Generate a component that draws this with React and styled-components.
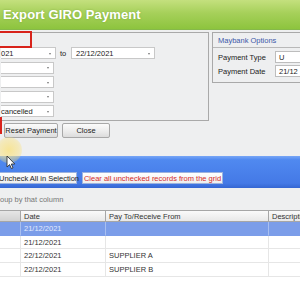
import React from "react";
import styled, { createGlobalStyle } from "styled-components";

const Global = createGlobalStyle`
  html, body { margin: 0; padding: 0; background: #eeeff0; }
  body { font-family: "Liberation Sans", Arial, sans-serif; }
`;

const Screen = styled.div`
  position: relative;
  width: 300px;
  height: 300px;
  overflow: hidden;
  background: #eeeff0;
  display: flex;
  flex-direction: column;
  font-size: 7.5px;
  color: #222;
`;

const TitleBar = styled.div`
  height: 30px;
  flex: none;
  display: flex;
  align-items: center;
  padding-left: 3px;
  background: linear-gradient(180deg, #c4e07e 0%, #a6d05a 45%, #8dc43e 100%);
  border-bottom: 1px solid #86b94a;
  box-sizing: border-box;
`;

const Title = styled.div`
  font-size: 13px;
  font-weight: bold;
  color: #fff;
  letter-spacing: 0.1px;
  text-shadow: 0 0 2px rgba(80, 120, 20, 0.4);
`;

const TopSection = styled.div`
  display: flex;
  align-items: flex-start;
  margin-top: 2px;
  flex: none;
`;

const LeftGroup = styled.div`
  width: 210px;
  margin-left: -1px;
  height: 89px;
  box-sizing: border-box;
  border: 1px solid #a9a9a9;
  padding: 14px 0 3px 1px;
  display: flex;
  flex-direction: column;
  gap: 2.5px;
  flex: none;
`;

const FieldRow = styled.div`
  display: flex;
  align-items: center;
  height: 12px;
`;

const Field = styled.div`
  position: relative;
  box-sizing: border-box;
  width: ${(p) => p.$w}px;
  height: 12px;
  background: #fff;
  border: 1px solid #c8c8c8;
  border-left: ${(p) => (p.$clipped ? "none" : "1px solid #c8c8c8")};
  padding-left: ${(p) => (p.$clipped ? 0 : 4)}px;
  display: flex;
  align-items: center;
  font-size: 7.5px;
  color: #222;
  white-space: nowrap;
  &::after {
    content: "";
    display: ${(p) => (p.$arrow ? "block" : "none")};
    position: absolute;
    right: 4px;
    top: 4.5px;
    border-left: 1.5px solid transparent;
    border-right: 1.5px solid transparent;
    border-top: 2px solid #777;
  }
`;

const ToLabel = styled.div`
  margin-left: 4px;
  width: 11px;
  font-size: 7.5px;
`;

const RightGroup = styled.div`
  margin-left: 3px;
  width: 100px;
  height: 51px;
  box-sizing: border-box;
  border: 1px solid #a9a9a9;
  flex: none;
  display: flex;
  flex-direction: column;
`;

const GroupHeader = styled.div`
  height: 14px;
  border-bottom: 1px solid #b8b8b8;
  display: flex;
  align-items: center;
  padding-left: 5px;
  color: #3d58a8;
  font-size: 7.5px;
  flex: none;
`;

const OptionRows = styled.div`
  display: flex;
  flex-direction: column;
  gap: 2px;
  padding-top: 3px;
`;

const OptionRow = styled.div`
  display: flex;
  align-items: center;
  height: 12px;
`;

const OptionLabel = styled.div`
  width: 62px;
  padding-left: 5px;
  box-sizing: border-box;
  flex: none;
`;

const OptionInput = styled.div`
  height: 12px;
  flex: 1;
  box-sizing: border-box;
  background: #fff;
  border: 1px solid #bdbdbd;
  padding-left: 3px;
  display: flex;
  align-items: center;
  white-space: nowrap;
  overflow: hidden;
`;

const ButtonRow = styled.div`
  display: flex;
  gap: 4px;
  margin: 2px 0 0 4px;
  flex: none;
`;

const Button = styled.div`
  width: ${(p) => p.$w}px;
  height: 15px;
  box-sizing: border-box;
  border: 1px solid #a8a8a8;
  border-radius: 2px;
  background: linear-gradient(180deg, #fbfbfb 0%, #ececec 55%, #dcdcdc 100%);
  display: flex;
  align-items: center;
  justify-content: center;
  font-size: 7.5px;
  color: #222;
`;

const ActionBand = styled.div`
  margin-top: 18px;
  height: 32px;
  flex: none;
  box-sizing: border-box;
  background: linear-gradient(180deg, #78a6f6 0%, #5089f0 12%, #4479e6 85%, #3566d2 100%);
  display: flex;
  align-items: flex-end;
  gap: 5px;
  padding-bottom: 4px;
`;

const BandButton = styled.div`
  width: ${(p) => p.$w}px;
  height: 12px;
  margin-left: ${(p) => p.$ml || 0}px;
  box-sizing: border-box;
  background: linear-gradient(180deg, #ffffff 0%, #eeeeee 100%);
  border: 1px solid #9db3de;
  display: flex;
  align-items: center;
  justify-content: ${(p) => (p.$left ? "flex-start" : "center")};
  font-size: 7.5px;
  color: ${(p) => p.$color || "#222"};
  white-space: nowrap;
`;

const GroupByBar = styled.div`
  height: 22px;
  flex: none;
  display: flex;
  align-items: center;
  color: #777;
  font-size: 7.5px;
  padding-top: 1px;
  box-sizing: border-box;
`;

const Grid = styled.div`
  flex: 1;
  background: #fff;
  display: flex;
  flex-direction: column;
`;

const COLS = "21px 85px 163px 40px";

const HeaderRow = styled.div`
  display: grid;
  grid-template-columns: ${COLS};
  height: 12px;
  flex: none;
`;

const HeaderCell = styled.div`
  box-sizing: border-box;
  border-top: 1px solid #a6a6a6;
  border-bottom: 1px solid #a6a6a6;
  border-right: 1px solid #a6a6a6;
  background: ${(p) =>
    p.$dark
      ? "linear-gradient(180deg, #e6e6e6 0%, #d2d2d2 100%)"
      : "linear-gradient(180deg, #fafafa 0%, #e8e8e8 100%)"};
  padding-left: 3px;
  display: flex;
  align-items: center;
  font-size: 7.5px;
  color: #333;
  white-space: nowrap;
  overflow: hidden;
`;

const DataRow = styled.div`
  display: grid;
  grid-template-columns: ${COLS};
  height: 13.7px;
  flex: none;
  background: ${(p) => (p.$selected ? "#7b9de9" : "#fff")};
`;

const DataCell = styled.div`
  box-sizing: border-box;
  border-bottom: 1px solid ${(p) => (p.$selected ? "#7b9de9" : "#e6e6e6")};
  border-right: 1px solid ${(p) => (p.$selected ? "#a8bff0" : "#e6e6e6")};
  padding-left: 3px;
  display: flex;
  align-items: center;
  font-size: 7.5px;
  color: ${(p) => (p.$selected ? "#e4ebff" : "#333")};
  white-space: nowrap;
`;

const RedFrame = styled.div`
  position: absolute;
  left: -2px;
  top: 31px;
  width: 34px;
  height: 17px;
  box-sizing: border-box;
  border: 2px solid #d8231b;
  background: #eeeff0;
`;

const RedEdge = styled.div`
  position: absolute;
  left: 0;
  top: 117px;
  width: 2px;
  height: 17px;
  background: #d8231b;
`;

const Halo = styled.div`
  position: absolute;
  left: -4px;
  top: 137px;
  width: 26px;
  height: 26px;
  border-radius: 50%;
  background: radial-gradient(circle, rgba(250, 225, 120, 0.75) 0%, rgba(250, 225, 120, 0.45) 55%, rgba(250, 225, 120, 0) 100%);
`;

const Cursor = styled.svg`
  position: absolute;
  left: 6px;
  top: 155px;
`;

const rows = [
  { date: "21/12/2021", pay: "", selected: true },
  { date: "21/12/2021", pay: "" },
  { date: "22/12/2021", pay: "SUPPLIER A" },
  { date: "22/12/2021", pay: "SUPPLIER B" },
];

export default function App() {
  return (
    <>
      <Global />
      <Screen>
        <TitleBar>
          <Title>Export GIRO Payment</Title>
        </TitleBar>
        <TopSection>
          <LeftGroup>
            <FieldRow>
              <Field $w={55} $clipped $arrow>021</Field>
              <ToLabel>to</ToLabel>
              <Field $w={84} $arrow>22/12/2021</Field>
            </FieldRow>
            <FieldRow>
              <Field $w={53} $clipped $arrow />
            </FieldRow>
            <FieldRow>
              <Field $w={53} $clipped $arrow />
            </FieldRow>
            <FieldRow>
              <Field $w={53} $clipped $arrow />
            </FieldRow>
            <FieldRow>
              <Field $w={53} $clipped $arrow>cancelled</Field>
            </FieldRow>
          </LeftGroup>
          <RightGroup>
            <GroupHeader>Maybank Options</GroupHeader>
            <OptionRows>
              <OptionRow>
                <OptionLabel>Payment Type</OptionLabel>
                <OptionInput>U</OptionInput>
              </OptionRow>
              <OptionRow>
                <OptionLabel>Payment Date</OptionLabel>
                <OptionInput>21/12</OptionInput>
              </OptionRow>
            </OptionRows>
          </RightGroup>
        </TopSection>
        <ButtonRow>
          <Button $w={54}>Reset Payment</Button>
          <Button $w={48}>Close</Button>
        </ButtonRow>
        <ActionBand>
          <BandButton $w={79} $ml={-2} $left>Uncheck All in Selection</BandButton>
          <BandButton $w={141} $color="#d42a2a">Clear all unchecked records from the grid</BandButton>
        </ActionBand>
        <GroupByBar>oup by that column</GroupByBar>
        <Grid>
          <HeaderRow>
            <HeaderCell $dark />
            <HeaderCell>Date</HeaderCell>
            <HeaderCell>Pay To/Receive From</HeaderCell>
            <HeaderCell>Descriptio</HeaderCell>
          </HeaderRow>
          {rows.map((r, i) => (
            <DataRow key={i} $selected={r.selected}>
              <DataCell $selected={r.selected} />
              <DataCell $selected={r.selected}>{r.date}</DataCell>
              <DataCell $selected={r.selected}>{r.pay}</DataCell>
              <DataCell $selected={r.selected} />
            </DataRow>
          ))}
        </Grid>
        <RedFrame />
        <RedEdge />
        <Halo />
        <Cursor width="10" height="15" viewBox="0 0 10 15">
          <path d="M1 1 L1 12 L3.6 9.6 L5.4 13.6 L7 12.9 L5.3 9 L8.8 9 Z" fill="#fff" stroke="#333" strokeWidth="0.9" strokeLinejoin="round" />
        </Cursor>
      </Screen>
    </>
  );
}
